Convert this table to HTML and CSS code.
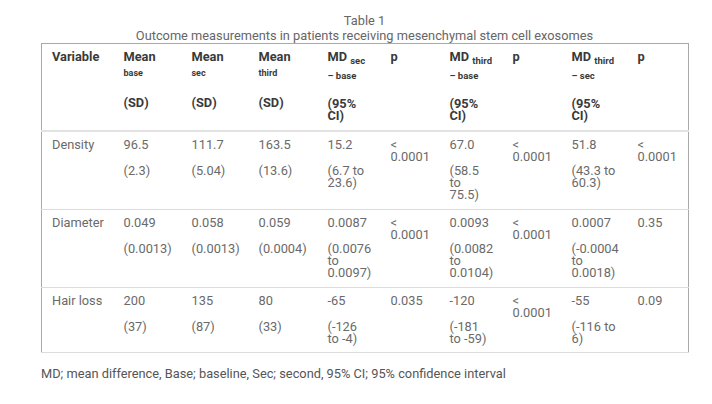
FILE: index.html
```html
<!DOCTYPE html>
<html>
<head>
<meta charset="utf-8">
<link rel="stylesheet" href="styles.css">
</head>
<body>
<div class="page">
  <div class="title">Table 1</div>
  <div class="caption">Outcome measurements in patients receiving mesenchymal stem cell exosomes</div>
  <table class="tbl">
    <colgroup>
      <col class="c1"><col class="c2"><col class="c3"><col class="c4"><col class="c5"><col class="c6"><col class="c7"><col class="c8"><col class="c9"><col class="c10">
    </colgroup>
    <thead>
      <tr>
        <th>Variable</th>
        <th><div>Mean</div><div><span class="sub1">base</span></div><div class="hci">(SD)</div></th>
        <th><div>Mean</div><div><span class="sub1">sec</span></div><div class="hci">(SD)</div></th>
        <th><div>Mean</div><div><span class="sub1">third</span></div><div class="hci">(SD)</div></th>
        <th><div>MD <span class="sub0">sec</span></div><div><span class="sub2">– base</span></div><div class="hci">(95%<br>CI)</div></th>
        <th>p</th>
        <th><div>MD <span class="sub0">third</span></div><div><span class="sub2">– base</span></div><div class="hci">(95%<br>CI)</div></th>
        <th>p</th>
        <th><div>MD <span class="sub0">third</span></div><div><span class="sub2">– sec</span></div><div class="hci">(95%<br>CI)</div></th>
        <th>p</th>
      </tr>
    </thead>
    <tbody>
      <tr>
        <td>Density</td>
        <td><div>96.5</div><div class="ci">(2.3)</div></td>
        <td><div>111.7</div><div class="ci">(5.04)</div></td>
        <td><div>163.5</div><div class="ci">(13.6)</div></td>
        <td><div>15.2</div><div class="ci">(6.7 to<br>23.6)</div></td>
        <td>&lt;<br>0.0001</td>
        <td><div>67.0</div><div class="ci">(58.5<br>to<br>75.5)</div></td>
        <td>&lt;<br>0.0001</td>
        <td><div>51.8</div><div class="ci">(43.3 to<br>60.3)</div></td>
        <td>&lt;<br>0.0001</td>
      </tr>
      <tr>
        <td>Diameter</td>
        <td><div>0.049</div><div class="ci">(0.0013)</div></td>
        <td><div>0.058</div><div class="ci">(0.0013)</div></td>
        <td><div>0.059</div><div class="ci">(0.0004)</div></td>
        <td><div>0.0087</div><div class="ci">(0.0076<br>to<br>0.0097)</div></td>
        <td>&lt;<br>0.0001</td>
        <td><div>0.0093</div><div class="ci">(0.0082<br>to<br>0.0104)</div></td>
        <td>&lt;<br>0.0001</td>
        <td><div>0.0007</div><div class="ci">(-0.0004<br>to<br>0.0018)</div></td>
        <td>0.35</td>
      </tr>
      <tr>
        <td>Hair loss</td>
        <td><div>200</div><div class="ci">(37)</div></td>
        <td><div>135</div><div class="ci">(87)</div></td>
        <td><div>80</div><div class="ci">(33)</div></td>
        <td><div>-65</div><div class="ci">(-126<br>to -4)</div></td>
        <td>0.035</td>
        <td><div>-120</div><div class="ci">(-181<br>to -59)</div></td>
        <td>&lt;<br>0.0001</td>
        <td><div>-55</div><div class="ci">(-116 to<br>6)</div></td>
        <td>0.09</td>
      </tr>
    </tbody>
  </table>
  <div class="foot">MD; mean difference, Base; baseline, Sec; second, 95% CI; 95% confidence interval</div>
</div>
</body>
</html>
```

FILE: styles.css
```css
html, body {
  margin: 0;
  padding: 0;
  background: #ffffff;
}
body {
  font-family: Roboto, "Liberation Sans", Arial, sans-serif;
  font-size: 12.8px;
  color: #666666;
}
.page {
  width: 647px;
  margin-left: 41px;
  padding-top: 13px;
}
.title,
.caption {
  text-align: center;
  line-height: 15px;
  color: #666666;
}
.tbl {
  width: 647px;
  border-collapse: collapse;
  table-layout: fixed;
  border: 1px solid #a9a9a9;
  line-height: 12px;
}
.c1 { width: 72px; }
.c2 { width: 68px; }
.c3 { width: 67px; }
.c4 { width: 69px; }
.c5 { width: 63px; }
.c6 { width: 59px; }
.c7 { width: 63px; }
.c8 { width: 59px; }
.c9 { width: 66px; }
.c10 { width: 61px; }
.tbl th,
.tbl td {
  text-align: left;
  vertical-align: top;
  padding: 7px 2px 8px 10px;
  white-space: nowrap;
}
.tbl th {
  font-weight: bold;
  color: #3a3a3a;
  border-bottom: 2px solid #e2e2e2;
}
.tbl td {
  color: #6a6a6a;
  border-bottom: 1px solid #dcdcdc;
}
.tbl tbody tr:last-child td {
  padding-bottom: 7px;
}
.sub0 {
  font-size: 9.5px;
  line-height: 0;
  vertical-align: -3px;
}
.sub1 {
  font-size: 9px;
  line-height: 0;
  vertical-align: -3px;
}
.sub2 {
  font-size: 9.5px;
  line-height: 0;
  vertical-align: -6px;
}
.hci {
  margin-top: 22px;
}
.ci {
  margin-top: 14px;
}
.foot {
  margin-top: 15px;
  line-height: 12px;
  color: #555555;
}
```
